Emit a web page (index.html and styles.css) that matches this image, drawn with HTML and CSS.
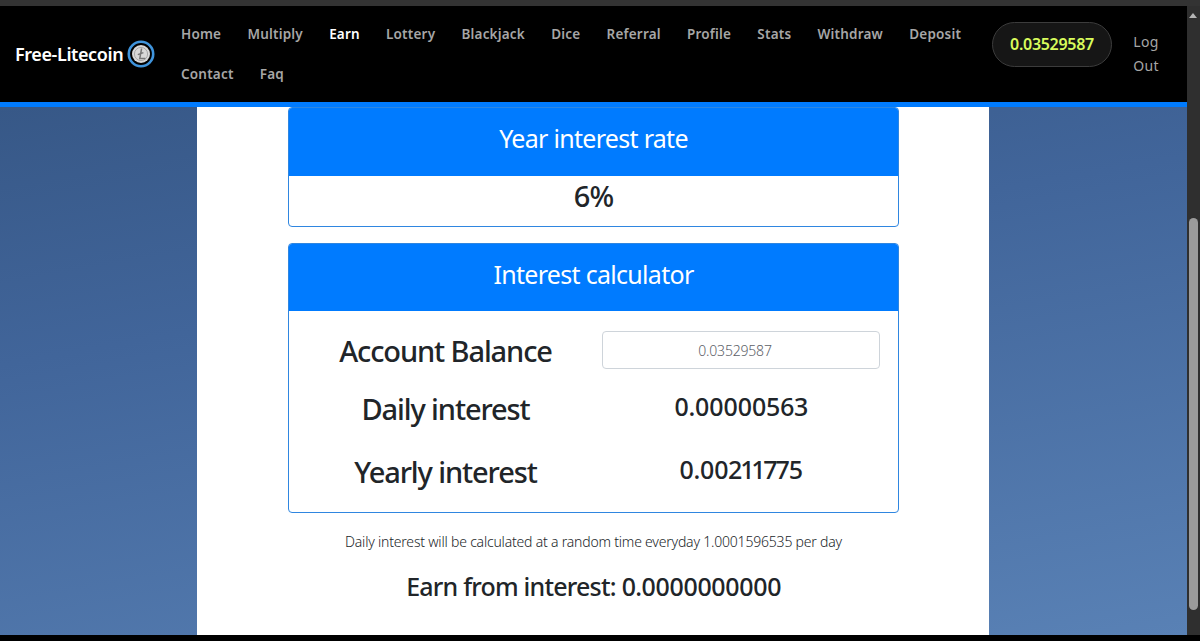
FILE: index.html
```html
<!DOCTYPE html>
<html lang="en">
	<head>
		<meta charset="UTF-8">
		<title>Free-Litecoin</title>
		<link rel="stylesheet" href="styles.css">
	</head>
	<body>
		<div class="strip"></div>
		<div class="window">
			<div class="page">
				<nav class="navbar">
					<a class="brand" href="#">
						Free-Litecoin
						<svg class="coin" width="28" height="28" viewBox="0 0 28 28">
							<circle cx="14" cy="14" r="12.2" fill="#000" stroke="#3f94dc" stroke-width="2.6"/>
							<circle cx="14" cy="14" r="9" fill="#d8d8d8"/>
							<circle cx="14" cy="14" r="6.6" fill="none" stroke="#9a9a9a" stroke-width="0.8"/>
							<path d="M14.6 8.5 L12.8 18.4 H18.4 M10.8 14.6 L16.4 12.6" fill="none" stroke="#777" stroke-width="1.5"/>
						</svg>
					</a>
					<ul class="links">
						<li><a href="#">Home</a></li>
						<li><a href="#">Multiply</a></li>
						<li><a class="active" href="#">Earn</a></li>
						<li><a href="#">Lottery</a></li>
						<li><a href="#">Blackjack</a></li>
						<li><a href="#">Dice</a></li>
						<li><a href="#">Referral</a></li>
						<li><a href="#">Profile</a></li>
						<li><a href="#">Stats</a></li>
						<li><a href="#">Withdraw</a></li>
						<li><a href="#">Deposit</a></li>
						<li><a href="#">Contact</a></li>
						<li><a href="#">Faq</a></li>
					</ul>
					<div class="balance">0.03529587</div>
					<a class="logout" href="#">Log Out</a>
				</nav>
				<main class="content">
					<div class="panel">
						<section class="card rate">
							<h2 class="card-head">Year interest rate</h2>
							<div class="rate-value">6%</div>
						</section>
						<section class="card calc">
							<h2 class="card-head">Interest calculator</h2>
							<div class="calc-grid">
								<div class="calc-label">Account Balance</div>
								<input class="calc-input" type="text" value="0.03529587" readonly>
								<div class="calc-label">Daily interest</div>
								<div class="calc-value">0.00000563</div>
								<div class="calc-label">Yearly interest</div>
								<div class="calc-value">0.00211775</div>
							</div>
						</section>
						<p class="note">Daily interest will be calculated at a random time everyday 1.0001596535 per day</p>
						<p class="earned">Earn from interest: 0.0000000000</p>
					</div>
				</main>
			</div>
			<div class="scrollbar">
				<div class="arrow"></div>
				<div class="thumb"></div>
			</div>
		</div>
		<div class="strip-bottom"></div>
	</body>
</html>
```

FILE: styles.css
```css
* {
	box-sizing: border-box;
	list-style: none;
	margin: 0;
	padding: 0;
}

html, body {
	height: 100%;
	overflow: hidden;
}

body {
	display: flex;
	flex-direction: column;
	background-color: #000;
	font-family: "Noto Sans", "Open Sans", sans-serif;
	color: #212529;
}

.strip {
	height: 6px;
	background-color: #333;
}

.strip-bottom {
	height: 6px;
	background-color: #000;
}

.window {
	flex: 1;
	display: flex;
	min-height: 0;
}

.page {
	flex: 1;
	display: flex;
	flex-direction: column;
	min-width: 0;
}

/* nav */
.navbar {
	height: 101px;
	display: flex;
	align-items: center;
	background-color: #000;
	border-bottom: 5px solid #007bff;
}

.brand {
	display: flex;
	align-items: center;
	gap: 4px;
	width: 181px;
	padding-left: 15px;
	color: #fff;
	font-size: 18px;
	font-weight: 600;
	letter-spacing: -0.4px;
	text-decoration: none;
}

.links {
	width: 795px;
	display: flex;
	flex-wrap: wrap;
	row-gap: 18px;
	column-gap: 26.2px;
}

.links a {
	display: block;
	height: 22px;
	line-height: 22px;
	color: #a6a6a6;
	font-size: 13.5px;
	font-weight: 600;
	letter-spacing: 0.2px;
	text-decoration: none;
}

.links a.active {
	color: #fff;
}

.balance {
	align-self: flex-start;
	width: 120px;
	height: 45px;
	margin-top: 16px;
	margin-left: 16px;
	border: 1px solid #3c3c3c;
	border-radius: 23px;
	background-color: #161616;
	color: #d8fb5c;
	font-size: 16px;
	font-weight: 600;
	line-height: 43px;
	letter-spacing: -0.3px;
	text-align: center;
}

.logout {
	width: 30px;
	margin-left: 19px;
	color: #a6a6a6;
	font-size: 14px;
	line-height: 24px;
	letter-spacing: 0.3px;
	text-align: center;
	text-decoration: none;
}

/* content */
.content {
	flex: 1;
	display: flex;
	justify-content: center;
	min-height: 0;
	background: linear-gradient(170deg, #375887 0%, #41659a 35%, #5981b5 100%);
}

.panel {
	width: 792px;
	margin-right: 1px;
	padding: 0 90px 0 91px;
	background-color: #fff;
	text-align: center;
}

.card {
	border: 1px solid #2f86e0;
	border-radius: 4px;
	overflow: hidden;
}

.card-head {
	height: 67px;
	background-color: #007bff;
	color: #fff;
	font-size: 25px;
	font-weight: 400;
	line-height: 60px;
	letter-spacing: -0.7px;
}

.rate {
	height: 120px;
}

.rate .card-head {
	height: 68px;
}

.rate-value {
	font-size: 29px;
	font-weight: 500;
	line-height: 40px;
	letter-spacing: -1px;
}

.calc {
	height: 270px;
	margin-top: 16px;
}

.calc-grid {
	display: grid;
	grid-template-columns: 313px 278px;
	grid-template-rows: 58px 58px 69px;
	align-items: center;
	padding-top: 10px;
}

.calc-label {
	font-size: 29px;
	font-weight: 500;
	letter-spacing: -1.1px;
}

.calc-input {
	width: 278px;
	height: 38px;
	padding-right: 12px;
	border: 1px solid #ced4da;
	border-radius: 4px;
	color: #5c6167;
	font-family: inherit;
	font-size: 14px;
	font-weight: 300;
	letter-spacing: -0.2px;
	text-align: center;
}

.calc-value {
	margin-top: -5px;
	font-size: 25px;
	font-weight: 500;
	font-variant-numeric: proportional-nums;
	letter-spacing: -0.5px;
}

.note {
	margin-top: 19px;
	font-size: 14px;
	font-weight: 300;
	line-height: 20px;
	letter-spacing: -0.2px;
}

.earned {
	margin-top: 16px;
	font-size: 25px;
	font-weight: 500;
	font-variant-numeric: proportional-nums;
	line-height: 36px;
	letter-spacing: -0.8px;
}

/* scrollbar */
.scrollbar {
	position: relative;
	width: 13px;
	background-color: #2f2f2f;
}

.arrow {
	position: absolute;
	top: 7px;
	left: 2px;
	border-left: 4.5px solid transparent;
	border-right: 4.5px solid transparent;
	border-bottom: 5px solid #b5b5b5;
}

.thumb {
	position: absolute;
	top: 212px;
	left: 2px;
	width: 9px;
	height: 392px;
	border-radius: 5px;
	background-color: #9b9b9b;
}
```
